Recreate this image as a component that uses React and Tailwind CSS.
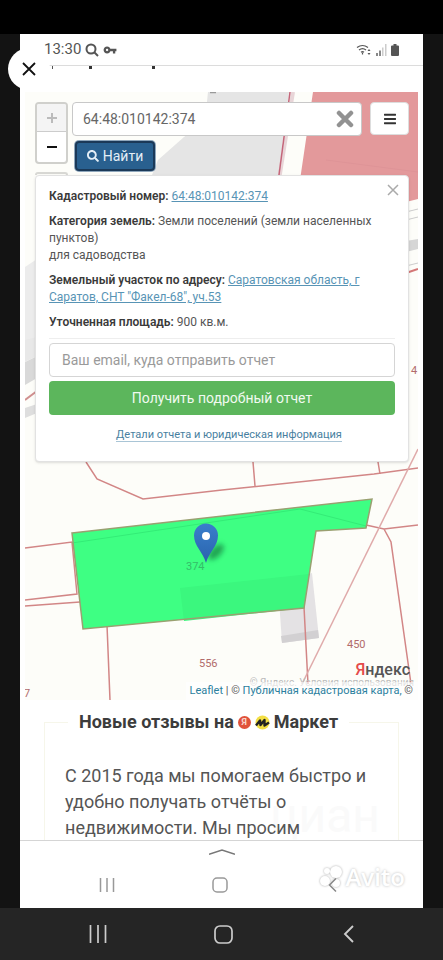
import React, { useState } from "react";
import { FaSearch, FaBars } from "react-icons/fa";
import { MdVpnKey } from "react-icons/md";

function StatusBar() {
  return (
    <div className="flex h-8 items-center justify-between border-b border-[#dcdcdc] px-6 text-[#555]">
      <div className="flex items-center gap-1">
        <span className="text-[15px]">13:30</span>
        <svg className="h-[14px] w-[14px]" viewBox="0 0 14 14" fill="none" stroke="currentColor" strokeWidth="2">
          <circle cx="6" cy="6" r="4.5" />
          <path d="M9.5 9.5 13 13" />
        </svg>
        <MdVpnKey className="h-[14px] w-[14px]" />
      </div>
      <div className="flex items-center gap-1">
        <svg className="h-[14px] w-[15px]" viewBox="0 0 15 14" fill="none" stroke="currentColor" strokeWidth="1.2">
          <path d="M1 4.500Q6.500 0.500 12 4.500M3 7Q6.500 4.200 10 7M5 9.200Q6.500 8 8 9.200" />
          <path d="M6.500 9.500v2" />
          <path d="M13 6l1.500 2h-3zM13 12l1.500-2h-3z" fill="currentColor" stroke="none" />
        </svg>
        <svg className="h-3 w-3" viewBox="0 0 12 12" fill="#888">
          <path d="M1 9h2v3H1zM4 6.500h2V12H4z" />
          <path d="M7 3.500h1.500V12H7zM10 0h1.500v12H10z" fill="#ccc" />
        </svg>
        <svg className="h-3 w-2" viewBox="0 0 8 12" fill="currentColor">
          <path d="M2.500 0h3v1.500H7q1 0 1 1V11q0 1-1 1H1q-1 0-1-1V2.500q0-1 1-1h1.500z" />
        </svg>
      </div>
    </div>
  );
}

// cadastral plan: buildings, plot borders, the selected plot and its pin
function MapDrawing() {
  return (
    <svg className="absolute inset-0 h-full w-full" viewBox="25 92 393 608" preserveAspectRatio="none">
      <defs>
        <linearGradient id="pin" x1="0" y1="0" x2="0" y2="1">
          <stop offset="0" stopColor="#3a7fcc" />
          <stop offset="1" stopColor="#2a63ad" />
        </linearGradient>
        <filter id="soft" x="-50%" y="-50%" width="200%" height="200%">
          <feGaussianBlur stdDeviation="2.500" />
        </filter>
      </defs>
      <rect x="25" y="92" width="393" height="608" fill="#fdfdf9" />
      <path d="M208 92H289L278 180H150L158 160 184 137 205 120z" fill="#e5e5e5" />
      <path d="M210 92.500h6" stroke="#999" strokeWidth="1.500" />
      <path d="M293 92 279 180" stroke="#e8d5d8" strokeWidth="4" />
      <path d="M290 92 279 175" stroke="#c4667a" strokeWidth="1.500" />
      <path d="M313 92h105v107l-12 3V180H300z" fill="#e3999b" />
      <path d="M326 160l92 12" stroke="#de9497" strokeWidth="1" />
      <path d="M25 267l12-8v80l-12 5z" fill="#ececec" />
      <path d="M25 362l12-6v22l-12 7z" fill="#d9d9d9" />
      <path d="M25 340l12-3v19l-12 6z" fill="#e8e8e8" />
      <path d="M25 408l12-4v9l-12 5z" fill="#dedede" />
      <path d="M25 400l12-9" stroke="#d08f8f" strokeWidth="2" />
      <path d="M406 212l12-3M406 220l12-3M406 266l12-3" stroke="#ccc" fill="none" />
      <path d="M406 241l12-2v10l-12 3z" fill="#d6d6d6" />
      <path d="M406 273l12-4" stroke="#d47777" strokeWidth="2" />

      <path d="M278 585 312 573 319 638 282 643z" fill="#e4e2e4" />
      <path d="M281 636 318 630 319 638 282 643z" fill="#d2d0d2" />
      <g fill="none" stroke="#d28686" strokeWidth="1.500">
        <path d="M86 462 97 479 143 499 222 490 374 474 418 468" />
        <path d="M253 462 255 486M378 462 380 474" />
        <path d="M25 548 72 542 77 594 25 600M25 606 80 602" />
        <path d="M107 625 110 700M304 607 308 684" />
        <path d="M366 525 384 529 418 525M384 529 391 542 411 684" />
      </g>
      <path d="M418 449 302 684" stroke="#dfaaaa" strokeWidth="1.500" />

      <path d="M72 533 372 499 366 528 316 531 304 608 83 629z" fill="#3eff83" />
      <path d="M180 588 309 574 304 608 184 621z" fill="#3bf77e" />
      <path d="M72 543 300 509 366 526" fill="none" stroke="#34ec77" />
      <path d="M72 533 372 499 366 528 316 531 304 608 83 629z" fill="none" stroke="#9aa071" strokeWidth="1.500" />

      <text x="186" y="570" fontSize="11" fill="#34bd69" fontFamily="Roboto, sans-serif">374</text>
      <g fontSize="11" fill="#b26b6b" fontFamily="Roboto, sans-serif">
        <text x="199" y="667">556</text>
        <text x="347" y="648">450</text>
        <text x="24" y="697">7</text>
        <text x="411" y="374">4</text>
      </g>

      <ellipse cx="216" cy="552" rx="10" ry="5" fill="#0d6b36" opacity="0.6" filter="url(#soft)" transform="rotate(-45 216 552)" />
      <path d="M206 563C203 552 194 546 194 535.500A12 12 0 0 1 218 535.500C218 546 209 552 206 563z" fill="url(#pin)" />
      <circle cx="206" cy="536" r="4" fill="#fff" />
    </svg>
  );
}

function SearchControls() {
  const [query, setQuery] = useState("64:48:010142:374");

  return (
    <div className="flex items-start">
      <div className="w-[33px] shrink-0">
        <div className="flex flex-col overflow-hidden rounded border-2 border-[#d0d0cc] bg-white">
          <button aria-label="Приблизить" className="flex h-7 items-center justify-center border-b border-[#ccc] bg-[#f4f4f4]">
            <svg className="h-[10px] w-[10px]" viewBox="0 0 10 10" stroke="#bbb" strokeWidth="2"><path d="M0 5h10M5 0v10" /></svg>
          </button>
          <button aria-label="Отдалить" className="flex h-[30px] items-center justify-center">
            <svg className="h-[10px] w-[10px]" viewBox="0 0 10 10" stroke="#111" strokeWidth="2"><path d="M0 5h10" /></svg>
          </button>
        </div>
        {/* next control, mostly under the card */}
        <div className="mt-2 h-[3px] rounded-t border-2 border-b-0 border-[#d8d8d4]" />
      </div>
      <form className="ml-1 min-w-0 flex-1" onSubmit={(e) => e.preventDefault()}>
        <div className="flex h-[34px] items-center rounded border border-[#c8c8c8] bg-white pl-[10px] pr-[7px]">
          <input
            aria-label="Кадастровый номер"
            className="min-w-0 flex-1 text-sm text-[#666] outline-none"
            value={query}
            onChange={(e) => setQuery(e.target.value)}
          />
          <button type="button" aria-label="Очистить" onClick={() => setQuery("")}>
            <svg className="h-[18px] w-[18px]" viewBox="0 0 18 18" stroke="#929292" strokeWidth="4.500" strokeLinecap="round"><path d="M3 3 15 15M15 3 3 15" /></svg>
          </button>
        </div>
        <button className="ml-[3px] mt-[5px] flex h-[30px] w-[80px] items-center justify-center gap-1 rounded border-2 border-[#1b3958] bg-[#29608f] text-sm text-[#e4eef6] ring-1 ring-[#8fa7bc]">
          <FaSearch className="h-3 w-3" />
          Найти
        </button>
      </form>
      <button aria-label="Меню" className="ml-2 flex h-[33px] w-[39px] shrink-0 items-center justify-center rounded border border-[#ddd] bg-white">
        <FaBars className="h-[14px] w-3 text-[#333]" />
      </button>
    </div>
  );
}

function PlotCard() {
  const [open, setOpen] = useState(true);
  if (!open) return null;

  return (
    <div className="relative rounded border border-[#e2e2e2] bg-white px-[13px] pb-[18px] pt-3 shadow-sm">
      <button aria-label="Закрыть" className="absolute right-[9px] top-2" onClick={() => setOpen(false)}>
        <svg className="h-3 w-3" viewBox="0 0 12 12" stroke="#aaa" strokeWidth="1.500"><path d="M1 1 11 11M11 1 1 11" /></svg>
      </button>
      <div className="flex flex-col gap-2 whitespace-nowrap text-xs leading-[17px] text-[#555]">
        <p>
          <b className="font-semibold text-[#3a3a3a]">Кадастровый номер:</b>{" "}
          <a href="#number" className="text-[#5894b5] underline">64:48:010142:374</a>
        </p>
        <p>
          <b className="font-semibold text-[#3a3a3a]">Категория земель:</b> Земли поселений (земли населенных
          <br />
          пунктов)
          <br />
          для садоводства
        </p>
        <p>
          <b className="font-semibold text-[#3a3a3a]">Земельный участок по адресу:</b>{" "}
          <a href="#address" className="text-[#5894b5] underline">
            Саратовская область, г
            <br />
            Саратов, СНТ "Факел-68", уч.53
          </a>
        </p>
        <p>
          <b className="font-semibold text-[#3a3a3a]">Уточненная площадь:</b> 900 кв.м.
        </p>
      </div>
      <hr className="mt-[7px] border-[#eee]" />
      <input
        type="email"
        aria-label="Email"
        placeholder="Ваш email, куда отправить отчет"
        className="mt-1 block h-[34px] w-full rounded border border-[#d5d5d5] px-3 text-sm placeholder:text-[#9a9a9a]"
      />
      <button className="mt-1 block h-[34px] w-full rounded bg-[#5cb65c] text-sm text-[#f0faf0]">
        Получить подробный отчет
      </button>
      <div className="mt-3 pl-[14px] text-center text-[11px] leading-4">
        <a href="#details" className="border-b border-[#a9c5d6] text-[#487f9f]">Детали отчета и юридическая информация</a>
      </div>
    </div>
  );
}

function MapPanel() {
  return (
    <div className="relative mx-[5px] mt-[26px] overflow-hidden">
      <MapDrawing />
      <div className="relative pb-[196px] pl-[10px] pr-[9px] pt-[10px]">
        <SearchControls />
        <PlotCard />
      </div>
      <div className="relative flex flex-col items-end">
        <span className="pr-2 text-base font-medium leading-6 text-[#555]">
          <span className="text-[#e54b4b]">Я</span>ндекс
        </span>
        <div className="relative">
          <span className="absolute -top-[7px] right-1 whitespace-nowrap text-[10px] text-[#bbb]">© Яндекс. Условия использования</span>
          <div className="relative whitespace-nowrap bg-white/60 pl-1 pr-[5px] text-[11px] leading-[18px] text-[#555]">
            <a href="#leaflet" className="text-[#2b7f9d]">Leaflet</a> | ©{" "}
            <a href="#map" className="text-[#2b7f9d]">Публичная кадастровая карта, </a>©
          </div>
        </div>
      </div>
    </div>
  );
}

function Reviews() {
  return (
    <div className="relative px-6 pt-[9px]">
      <span className="absolute bottom-0 right-[43px] text-[48px] leading-none text-[#fafafa]">циан</span>
      <fieldset className="relative h-[131px] min-w-0 border border-b-0 border-[#f6f6ea] pl-[20px]">
        <legend className="ml-[3px] flex items-center gap-1 whitespace-nowrap px-[11px] text-[18px] font-bold leading-[26px] text-[#3c3c3c]">
          Новые отзывы на
          <span className="flex h-[13px] w-[13px] items-center justify-center rounded-full bg-[#e0523a] text-[9px] leading-none text-[#f8d5cc]">Я</span>
          <svg className="h-[15px] w-[15px]" viewBox="0 0 15 15">
            <circle cx="7.500" cy="7.500" r="7" fill="#f3df45" />
            <path d="M1 10.500 5 5.500 5.500 10 9.500 5 9.500 10.500 14 7.500" fill="none" stroke="#222" strokeWidth="2.400" strokeLinejoin="round" />
          </svg>
          Маркет
        </legend>
        <p className="mt-7 whitespace-nowrap text-[18px] leading-[26px] text-[#555]">
          С 2015 года мы помогаем быстро и
          <br />
          удобно получать отчёты о
          <br />
          недвижимости. Мы просим
        </p>
      </fieldset>
    </div>
  );
}

function InnerNav() {
  return (
    <div className="relative h-[68px] border-t border-[#d5d5d5] bg-white">
      <div className="absolute right-[18px] top-[22px] flex items-center gap-[2px] font-['Open_Sans'] text-2xl font-semibold leading-7 text-white [text-shadow:0_0_3px_#bbb]">
        <svg className="h-6 w-6 drop-shadow-[0_0_1px_#aaa]" viewBox="0 0 24 24" fill="#fff">
          <circle cx="8" cy="6" r="3" />
          <circle cx="17" cy="7" r="6" />
          <circle cx="6" cy="16" r="5" />
          <circle cx="17" cy="18" r="4" />
        </svg>
        Avito
      </div>
      <svg className="mx-auto mt-2 h-[6px] w-[26px]" viewBox="0 0 26 6" fill="none" stroke="#777" strokeWidth="1.500"><path d="M0 5.200 13 1 26 5.200" /></svg>
      <div className="relative mt-[22px] grid grid-cols-[113px_1fr_113px] justify-items-center pl-[30px] pr-[34px]">
        <button aria-label="Недавние">
          <svg className="h-4 w-4" viewBox="0 0 16 16" stroke="#999" strokeWidth="1.500"><path d="M1.500 1v14M8 1v14M14.500 1v14" /></svg>
        </button>
        <button aria-label="Домой">
          <svg className="h-4 w-4" viewBox="0 0 16 16" fill="none" stroke="#999" strokeWidth="1.500"><rect x="1" y="1" width="14" height="14" rx="4" /></svg>
        </button>
        <button aria-label="Назад">
          <svg className="h-4 w-[9px]" viewBox="0 0 9 16" fill="none" stroke="#888" strokeWidth="1.500"><path d="M8 1.500 1.500 8 8 14.500" /></svg>
        </button>
      </div>
    </div>
  );
}

export default function App() {
  return (
    <div className="relative flex min-h-screen flex-col bg-[#131313] font-['Roboto',sans-serif]">
      <div className="h-[34px] bg-black" />
      <main className="relative mx-5 flex-1 bg-white">
        <StatusBar />
        {/* tips of the heading scrolled under the status bar */}
        <div className="flex h-0 gap-9 pl-8">
          <span className="h-[3px] w-px bg-[#555]" />
          <span className="h-[3px] w-[3px] bg-[#333]" />
          <span className="ml-6 h-[3px] w-[3px] bg-[#333]" />
        </div>
        <MapPanel />
        <Reviews />
        <InnerNav />
        <button aria-label="Закрыть просмотр" className="absolute -left-3 top-[14px] flex h-[42px] w-[42px] items-center justify-center rounded-full bg-white">
          <svg className="h-[14px] w-[14px]" viewBox="0 0 14 14" stroke="#111" strokeWidth="1.800"><path d="M1 1 13 13M13 1 1 13" /></svg>
        </button>
      </main>
      <nav className="flex h-[52px] items-center justify-center gap-[107px] bg-[#252525] pl-[3px]">
        <button aria-label="Недавние приложения">
          <svg className="h-[18px] w-[18px]" viewBox="0 0 18 18" stroke="#ccc" strokeWidth="1.700"><path d="M1.500 0v18M9 0v18M16.500 0v18" /></svg>
        </button>
        <button aria-label="Главный экран">
          <svg className="h-[19px] w-[19px]" viewBox="0 0 19 19" fill="none" stroke="#ccc" strokeWidth="1.700"><rect x="1" y="1" width="17" height="17" rx="5" /></svg>
        </button>
        <button aria-label="Назад">
          <svg className="h-[18px] w-[18px]" viewBox="0 0 18 18" fill="none" stroke="#ccc" strokeWidth="1.900"><path d="M13 1 5 9 13 17" /></svg>
        </button>
      </nav>
    </div>
  );
}
